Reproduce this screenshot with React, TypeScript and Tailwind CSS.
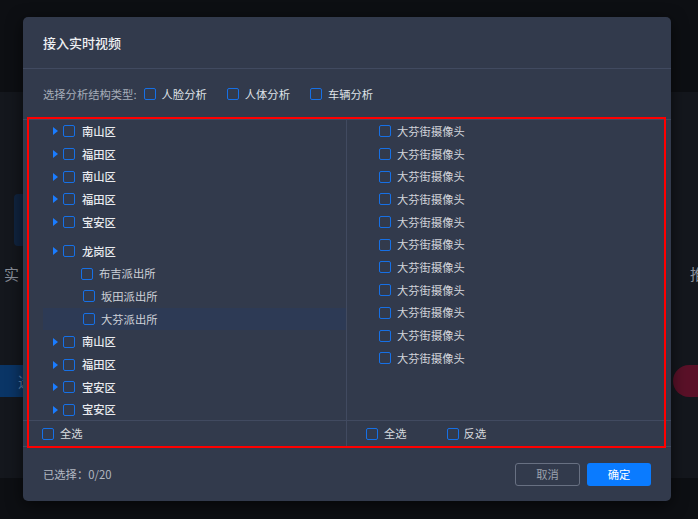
import React from "react";

const font = { fontFamily: '"Noto Sans CJK SC", "Noto Sans", sans-serif' };

function Box({ className = "" }: { className?: string }) {
  return (
    <span
      className={
        "inline-block w-[12px] h-[12px] shrink-0 rounded-[2px] border-[1.5px] border-[#1670e6] " +
        className
      }
    />
  );
}

function Caret() {
  return (
    <svg width="5" height="8" viewBox="0 0 5 8" className="shrink-0 block">
      <path d="M0 0 L5 4 L0 8 Z" fill="#1a7cff" />
    </svg>
  );
}

type Row =
  | { kind: "parent"; label: string; mt?: boolean }
  | { kind: "child"; label: string; off: number; active?: boolean };

const leftRows: Row[] = [
  { kind: "parent", label: "南山区" },
  { kind: "parent", label: "福田区" },
  { kind: "parent", label: "南山区" },
  { kind: "parent", label: "福田区" },
  { kind: "parent", label: "宝安区" },
  { kind: "parent", label: "龙岗区", mt: true },
  { kind: "child", label: "布吉派出所", off: 38 },
  { kind: "child", label: "坂田派出所", off: 40 },
  { kind: "child", label: "大芬派出所", off: 40, active: true },
  { kind: "parent", label: "南山区" },
  { kind: "parent", label: "福田区" },
  { kind: "parent", label: "宝安区" },
  { kind: "parent", label: "宝安区" },
];

export default function App() {
  return (
    <div
      className="relative w-[698px] h-[519px] overflow-hidden bg-[#0d0f13] flex flex-col"
      style={font}
    >
      {/* page underneath */}
      <div className="h-[92px] bg-[#0d0f13]" />
      <div className="h-[386px] bg-[#14171d]" />
      <div className="flex-1 bg-[#0d0f13]" />
      <div className="absolute left-[14px] top-[194px] w-[12px] h-[52px] rounded-[4px] bg-[#10243f]" />
      <div className="absolute left-[4px] top-[263px] text-[15px] text-[#8a8f99]">实</div>
      <div className="absolute left-0 top-[365px] w-[24px] h-[32px] bg-[#0a3566] text-[#5b7fa8] text-[14px] pl-[18px] leading-[32px]">
        选
      </div>
      <div className="absolute left-[690px] top-[263px] text-[15px] text-[#8a8f99]">推</div>
      <div className="absolute left-[673px] top-[365px] w-[60px] h-[32px] rounded-full bg-[#5a1128]" />

      {/* modal */}
      <div className="absolute left-[23px] top-[17px] w-[648px] h-[484px] rounded-[5px] bg-[#323a4c] shadow-[0_4px_16px_rgba(0,0,0,0.6)] flex flex-col">
        <div className="h-[52px] shrink-0 flex items-center px-[20px] border-b border-[#414a60] text-[13px] font-medium text-[#eef0f3]">
          接入实时视频
        </div>
        <div className="h-[50px] shrink-0 flex items-center px-[20px] text-[11.3px]">
          <span className="text-[#a6adb9]">选择分析结构类型:</span>
          <span className="ml-[7px] flex items-center gap-[6px] text-[#dfe2e7]">
            <Box />
            人脸分析
          </span>
          <span className="ml-[20px] flex items-center gap-[6px] text-[#dfe2e7]">
            <Box />
            人体分析
          </span>
          <span className="ml-[20px] flex items-center gap-[6px] text-[#dfe2e7]">
            <Box />
            车辆分析
          </span>
        </div>

        {/* transfer panel */}
        <div className="h-[328px] shrink-0 border-y border-[#414a60] flex flex-col">
          <div className="flex-1 flex min-h-0">
            <div className="w-[324px] border-r border-[#414a60] pl-[20px] overflow-hidden">
              {leftRows.map((r, i) =>
                r.kind === "parent" ? (
                  <div
                    key={i}
                    className={
                      "h-[22.7px] flex items-center text-[11.3px] font-medium text-[#e9ebef] " +
                      (r.mt ? "mt-[6.3px]" : "")
                    }
                  >
                    <span className="ml-[10px]">
                      <Caret />
                    </span>
                    <span className="ml-[5px] flex">
                      <Box />
                    </span>
                    <span className="ml-[7px]">{r.label}</span>
                  </div>
                ) : (
                  <div
                    key={i}
                    className={
                      "h-[22.7px] flex items-center text-[11.3px] text-[#cdd1d8] " +
                      (r.active ? "bg-[#2d3a55]" : "")
                    }
                  >
                    <span className="flex" style={{ marginLeft: r.off }}>
                      <Box />
                    </span>
                    <span className="ml-[6px]">{r.label}</span>
                  </div>
                )
              )}
            </div>
            <div className="flex-1 pl-[32px]">
              {Array.from({ length: 11 }).map((_, i) => (
                <div
                  key={i}
                  className="h-[22.7px] flex items-center gap-[6px] text-[11.3px] text-[#d2d5db]"
                >
                  <Box />
                  大芬街摄像头
                </div>
              ))}
            </div>
          </div>
          <div className="h-[26px] shrink-0 border-t border-[#414a60] flex text-[11.3px] text-[#d6d9de]">
            <div className="w-[324px] border-r border-[#414a60] flex items-center pl-[19px] gap-[6px]">
              <Box />
              全选
            </div>
            <div className="flex-1 flex items-center pl-[19px]">
              <span className="flex items-center gap-[6px]">
                <Box />
                全选
              </span>
              <span className="ml-[40px] flex items-center gap-[5px]">
                <Box />
                反选
              </span>
            </div>
          </div>
        </div>

        <div className="flex-1 flex items-center justify-between pl-[20px] pr-[20px]">
          <span className="text-[11.3px] text-[#b3b8c2]">已选择：0/20</span>
          <div className="flex items-center gap-[7px]">
            <button className="w-[65px] h-[23px] rounded-[3px] border border-[#687082] text-[11.3px] text-[#9aa1ad]">
              取消
            </button>
            <button className="w-[64px] h-[23px] rounded-[3px] bg-[#0a7bff] text-[11.3px] text-white">
              确定
            </button>
          </div>
        </div>

        {/* red annotation rectangle */}
        <div className="absolute left-[4px] top-[100px] w-[639px] h-[331px] border-2 border-[#ff0000] pointer-events-none" />
      </div>
    </div>
  );
}
